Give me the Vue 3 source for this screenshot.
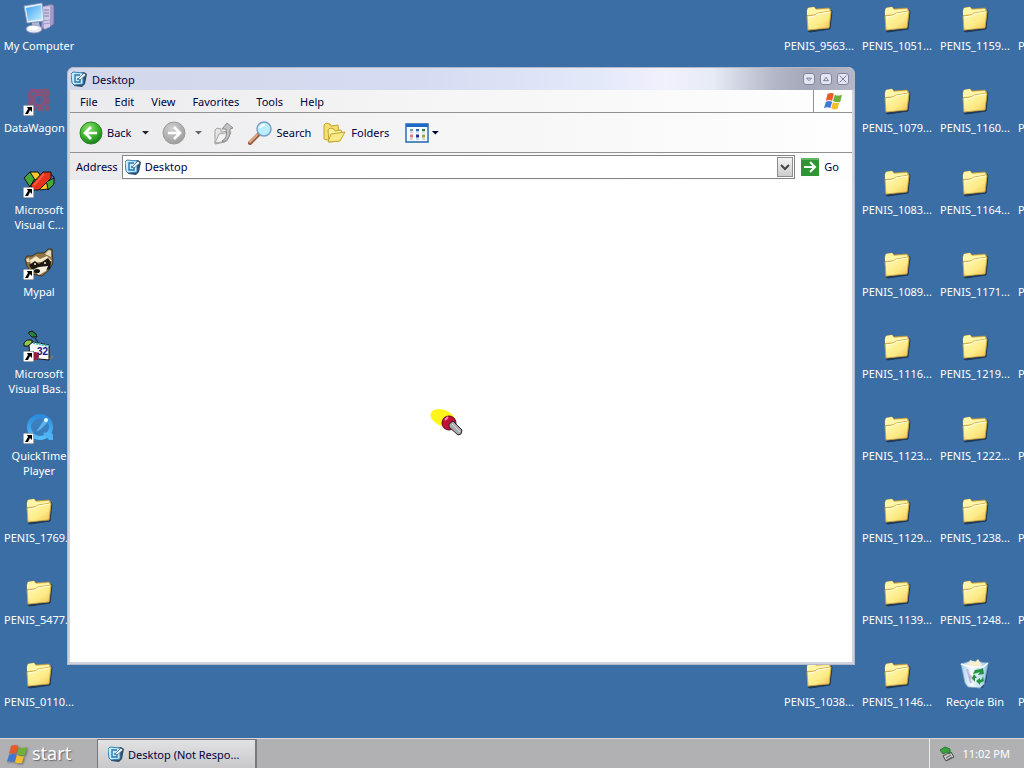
<script setup>
import { ref } from 'vue'

const address = ref('Desktop')

const menus = ['File', 'Edit', 'View', 'Favorites', 'Tools', 'Help']

const folder = (label, col, row) => ({ icon: 'folder', label, col, row })

const leftItems = [
  { icon: 'computer', label: 'My Computer', col: 1, row: 1 },
  { icon: 'wagon', label: 'DataWagon', col: 1, row: 2, shortcut: true, start: true },
  { icon: 'vc', label: 'Microsoft Visual C...', col: 1, row: 3, shortcut: true },
  { icon: 'mypal', label: 'Mypal', col: 1, row: 4, shortcut: true },
  { icon: 'vb', label: 'Microsoft Visual Bas...', col: 1, row: 5, shortcut: true, number: '32' },
  { icon: 'quicktime', label: 'QuickTime Player', col: 1, row: 6, shortcut: true },
  folder('PENIS_1769...', 1, 7),
  folder('PENIS_5477...', 1, 8),
  folder('PENIS_0110...', 1, 9)
]

const column12 = ['1051', '1079', '1083', '1089', '1116', '1123', '1129', '1139', '1146']
const column13 = ['1159', '1160', '1164', '1171', '1219', '1222', '1238', '1248']

const items = [
  ...leftItems,
  folder('PENIS_9563...', 11, 1),
  folder('PENIS_1038...', 11, 9),
  ...column12.map((n, i) => folder(`PENIS_${n}...`, 12, i + 1)),
  ...column13.map((n, i) => folder(`PENIS_${n}...`, 13, i + 1)),
  { icon: 'bin', label: 'Recycle Bin', col: 13, row: 9 },
  ...column12.map((n, i) => ({ ...folder('P', 14, i + 1), start: true }))
]
</script>

<template>
  <div class="screen">
    <svg class="defs" aria-hidden="true">
      <defs>
        <linearGradient id="g-folder" x1="0" y1="0" x2="1" y2="1">
          <stop offset="0" stop-color="#fffcb8" />
          <stop offset="0.6" stop-color="#fdea86" />
          <stop offset="1" stop-color="#efc04e" />
        </linearGradient>
        <linearGradient id="g-screen" x1="0" y1="0" x2="1" y2="1">
          <stop offset="0" stop-color="#3f9ff2" />
          <stop offset="1" stop-color="#c2f1ff" />
        </linearGradient>
        <radialGradient id="g-back" cx="0.4" cy="0.3" r="0.75">
          <stop offset="0" stop-color="#8be36c" />
          <stop offset="0.6" stop-color="#37ae2a" />
          <stop offset="1" stop-color="#14761a" />
        </radialGradient>
        <radialGradient id="g-next" cx="0.4" cy="0.3" r="0.75">
          <stop offset="0" stop-color="#d2d2d2" />
          <stop offset="1" stop-color="#9a9a9a" />
        </radialGradient>
        <linearGradient id="g-bin" x1="0" y1="0" x2="1" y2="0">
          <stop offset="0" stop-color="#a8d0ee" />
          <stop offset="0.4" stop-color="#f3faff" />
          <stop offset="1" stop-color="#9cc6e4" />
        </linearGradient>
        <linearGradient id="g-qt" x1="0" y1="0" x2="0" y2="1">
          <stop offset="0" stop-color="#2a8be0" />
          <stop offset="1" stop-color="#58bcf6" />
        </linearGradient>
      </defs>
      <symbol id="i-folder" viewBox="0 0 32 32">
        <path d="M5 29 26 26 28 8 29 9 27 27 7 30z" fill="#16263a" stroke="#16263a" opacity="0.75" />
        <path d="M4 9 5 6 11 5 13 7 26 6 28 9 26 25 5 28z" fill="#f0cf68" stroke="#b9923a" stroke-width="0.7" />
        <path d="M4 9 5 6 11 5 13 8 26 7 26 11 4 13z" fill="#fff6a8" />
        <path d="M4 14 12 13 15 11 28 9 26 26 5 28z" fill="url(#g-folder)" stroke="#c59c3c" stroke-width="0.8" />
        <path d="M5 15 12 14 15 12 27 10" fill="none" stroke="#fffde0" />
      </symbol>
      <symbol id="i-computer" viewBox="0 0 32 32">
        <path d="M20 4 29 2 31 4 31 22 22 28 18 25z" fill="#a39ac8" stroke="#6a6698" stroke-width="0.7" />
        <path d="M19 5 27 4 27 25 21 27z" fill="#cfcaea" />
        <path d="M21 8h5M21 11h5M21 14h5" stroke="#8078a8" />
        <path d="M20 19 27 18M20 22 27 21" stroke="#a09ac8" />
        <path d="M1 4 19 1 21 19 4 21z" fill="#e8f1fb" stroke="#8198bd" stroke-width="0.8" />
        <path d="M3 6 18 3 19 17 5 19z" fill="url(#g-screen)" />
        <path d="M9 21 16 20 17 25 9 25z" fill="#b4bad0" />
        <ellipse cx="11" cy="27" rx="8" ry="4" fill="#e7e9f3" stroke="#8a92b4" stroke-width="0.8" />
        <ellipse cx="10" cy="26" rx="5" ry="2" fill="#fff" />
      </symbol>
      <symbol id="i-wagon" viewBox="0 0 32 32">
        <g fill="none" stroke="#a0486a" opacity="0.7">
          <path d="M7 7h18v18H7z" stroke-width="4" stroke-dasharray="7 1" stroke-linejoin="round" />
          <circle cx="16" cy="16" r="6" stroke-width="4" />
        </g>
        <circle cx="16" cy="16" r="2" fill="#6a5586" />
      </symbol>
      <symbol id="i-vc" viewBox="0 0 32 32">
        <g stroke="#111" stroke-linejoin="round">
          <path d="M1 12 7 6 12 12 7 21z" fill="#43a935" />
          <path d="M7 6 15 6 19 12 12 14z" fill="#f4c82e" />
          <path d="M25 6 31 11 30 18 24 13z" fill="#3978cf" />
          <path d="M31 12 31 18 25 24 23 16z" fill="#43a935" />
          <path d="M14 20 23 14 25 23 17 24z" fill="#f4c82e" />
          <path d="M8 19 20 6 28 6 28 12 16 24 9 24z" fill="#e5321c" />
        </g>
        <path d="M11 19 21 8" stroke="#ff5a3c" stroke-width="2" />
      </symbol>
      <symbol id="i-mypal" viewBox="0 0 32 32">
        <path d="M2 11 4 8 9 8 14 5 21 5 25 1 29 1 30 15 26 22 19 28 9 26 4 18z" fill="#8f7446" stroke="#40341f" />
        <path d="M22 6 26 2 28 3 28 9z" fill="#e8dabb" />
        <path d="M3 11 6 10 7 14 4 14z" fill="#e8dabb" />
        <path d="M7 12 13 8 17 11 24 8 29 13 21 14 16 14 8 17z" fill="#f4e7c7" />
        <path d="M6 17 12 13 16 16 25 10 28 14 27 21 20 23 15 19 9 22z" fill="#1e1812" />
        <path d="M10 22 16 19 25 18 23 23 16 27z" fill="#f4eddd" />
        <circle cx="12" cy="16" r="1" fill="#f4edd0" />
        <circle cx="22" cy="15" r="1" fill="#f4edd0" />
        <ellipse cx="14" cy="23" rx="3" ry="2" fill="#15110e" />
      </symbol>
      <symbol id="i-vb" viewBox="0 0 32 32">
        <path d="M6 2 9 1 13 4 14 7 9 7 6 4z" fill="#23833b" stroke="#111" />
        <path d="M12 8 15 12" stroke="#111" />
        <path d="M1 13 4 10 9 10 9 14 5 16 1 16z" fill="#91c84a" stroke="#111" />
        <path d="M6 15 10 12 26 15 26 30 7 28z" fill="#f8f8f8" stroke="#111" />
        <path d="M10 13 26 16" stroke="#44b7bc" stroke-width="2" stroke-dasharray="2 1" />
        <circle cx="12" cy="26" r="4" fill="#95203d" />
        <path d="M27 29l3-3" stroke="#8a7660" stroke-width="2" />
      </symbol>
      <symbol id="i-quicktime" viewBox="0 0 32 32">
        <circle cx="17" cy="15" r="11" fill="#3c7fbe" stroke="url(#g-qt)" stroke-width="4" />
        <path d="M20 21 26 28 30 28 30 22 26 20z" fill="#4db2f3" />
        <path d="M13 20 21 8 25 10 18 17z" fill="#5cb4ef" />
        <circle cx="23" cy="8" r="2" fill="#e2f8ff" />
      </symbol>
      <symbol id="i-bin" viewBox="0 0 32 32">
        <path d="M9 30 24 30 30 6 27 25z" fill="#142d4b" opacity="0.5" />
        <path d="M2 6 12 3 29 5 25 26 21 30 9 29 6 25z" fill="url(#g-bin)" stroke="#7fa7c5" stroke-width="0.8" />
        <path d="M9 8 11 2 16 4 19 1 23 7 17 10z" fill="#f8efd1" />
        <path d="M2 6 11 9 24 9 29 5" fill="none" stroke="#fff" stroke-width="1.5" />
        <path d="M8 11 12 25M10 17l5 5" stroke="#c1b4dd" stroke-width="2" />
        <path d="M14 16 16 12 22 11 24 10 25 16 19 17 21 14 18 15zM24 18 25 23 21 25 21 27 17 23 21 20 21 22 23 21zM16 24 13 20 15 16 18 20 16 20z" fill="#20963c" />
      </symbol>
      <symbol id="i-shortcut" viewBox="0 0 11 11">
        <path d="M0 0h11v11H0z" fill="#fff" stroke="#555" />
        <path d="M4 2h5v5L7 5 5 9H2L5 4z" fill="#000" />
      </symbol>
      <symbol id="i-desk" viewBox="0 0 16 16">
        <path d="M3 3 13 1 16 3 14 13 11 16 3 15z" fill="#2f4c68" />
        <path d="M0 3 2 1 12 2 12 13 3 14 1 12z" fill="#cdeafb" stroke="#2f83b7" />
        <path d="M9 4 4 4 4 11 9 11 9 8 6 8" fill="none" stroke="#2277ae" stroke-width="1.4" />
        <path d="M7 8 13 2 15 4 9 9z" fill="#e8f6ff" stroke="#31536d" stroke-width="0.7" />
      </symbol>
      <symbol id="i-flag" viewBox="0 0 20 20">
        <path d="M4 2Q8 0 11 2L9 10Q6 8 2 10z" fill="#e65b2b" />
        <path d="M12 3Q15 5 20 3L18 11Q14 12 10 10z" fill="#6fb03a" />
        <path d="M2 11Q6 9 9 11L7 18Q4 16 0 18z" fill="#3f78d4" />
        <path d="M10 11Q13 13 17 12L15 19Q11 20 8 18z" fill="#f3bd2c" />
      </symbol>
    </svg>

    <main class="desktop">
      <div
        v-for="(item, i) in items"
        :key="i"
        class="item"
        :class="{ start: item.start }"
        :style="{ gridColumn: item.col, gridRow: item.row }"
      >
        <div class="item-icon">
          <svg class="glyph"><use :href="'#i-' + item.icon" /></svg>
          <span v-if="item.number" class="number">{{ item.number }}</span>
          <svg v-if="item.shortcut" class="shortcut"><use href="#i-shortcut" /></svg>
        </div>
        <span class="item-label">{{ item.label }}</span>
      </div>

      <section class="window">
        <header class="titlebar">
          <svg class="small-icon"><use href="#i-desk" /></svg>
          <span class="title">Desktop</span>
          <button class="caption" aria-label="Minimize">
            <svg viewBox="0 0 12 12"><path d="M3 5h6L6 8z" /></svg>
          </button>
          <button class="caption" aria-label="Maximize">
            <svg viewBox="0 0 12 12"><path d="M3 8h6L6 4z" /></svg>
          </button>
          <button class="caption" aria-label="Close">
            <svg viewBox="0 0 12 12"><path d="M2 2l8 8M10 2l-8 8" /></svg>
          </button>
        </header>

        <nav class="menubar">
          <button v-for="menu in menus" :key="menu" class="menu">{{ menu }}</button>
          <div class="brand"><svg><use href="#i-flag" /></svg></div>
        </nav>

        <div class="toolbar">
          <button class="tool back">
            <svg class="tool-icon" viewBox="0 0 24 24">
              <circle cx="12" cy="12" r="11" fill="url(#g-back)" stroke="#2c8429" />
              <path d="M12 6 6 12l6 6M7 12h11" fill="none" stroke="#fff" stroke-width="2.6" />
            </svg>
            Back
          </button>
          <button class="arrow" aria-label="Back history"></button>
          <button class="tool forward" aria-label="Forward">
            <svg class="tool-icon" viewBox="0 0 24 24">
              <circle cx="12" cy="12" r="11" fill="url(#g-next)" stroke="#9c9c9c" />
              <path d="M12 6l6 6-6 6M6 12h11" fill="none" stroke="#fff" stroke-width="2.6" />
            </svg>
          </button>
          <button class="arrow dim" aria-label="Forward history"></button>
          <button class="tool up" aria-label="Up">
            <svg class="tool-icon" viewBox="0 0 24 24">
              <path d="M3 9 5 7l4 1v3l7-1-3 11-10 2z" fill="#e5e5e5" stroke="#a2a2a2" />
              <path d="M3 22 7 13l12-2-4 9z" fill="#f2f2f2" stroke="#a2a2a2" />
              <path d="M10 20q6-3 4-12h-4l5-6 6 5-3 1q1 10-7 13z" fill="#c3c3c3" stroke="#8b8b8b" />
            </svg>
          </button>
          <button class="tool search">
            <svg class="tool-icon" viewBox="0 0 24 24">
              <path d="M10 14 2 22" stroke="#935c42" stroke-width="4" stroke-linecap="round" />
              <path d="M9 14 2 21" stroke="#e9a57f" stroke-width="2" stroke-linecap="round" />
              <circle cx="16" cy="8" r="7" fill="#b9effc" stroke="#7d9fc4" stroke-width="1.5" />
              <path d="M12 7q1-3 5-3" fill="none" stroke="#fff" stroke-width="2" />
            </svg>
            Search
          </button>
          <button class="tool folders">
            <svg class="tool-icon" viewBox="0 0 24 24">
              <path d="M1 4 3 2l4 1 1 2 7-1 1 11-12 4-3-1z" fill="#f4df70" stroke="#c4a42f" />
              <path d="M5 9 7 7l4 1 1 2 6-1 1 3-3 8-10 1z" fill="#fff2a1" stroke="#c4a42f" />
              <path d="M5 21 8 13l14-2-5 9z" fill="#f9e988" stroke="#c4a42f" />
            </svg>
            Folders
          </button>
          <button class="tool views" aria-label="Views">
            <svg class="tool-icon" viewBox="0 0 24 20">
              <path d="M1 1h22v18H1z" fill="#f4faff" stroke="#2263ad" stroke-width="1.4" />
              <path d="M1 1h22v3H1z" fill="#1b6ac4" />
              <path d="M5 7h3" stroke="#7d95ad" stroke-width="2" />
              <path d="M11 7h3" stroke="#2668a8" stroke-width="2" />
              <path d="M17 7h3" stroke="#268444" stroke-width="2" />
              <path d="M5 13h3" stroke="#e27b73" stroke-width="3" />
              <path d="M11 13h3" stroke="#262f8b" stroke-width="3" />
              <path d="M17 13h3" stroke="#9fa63f" stroke-width="3" />
              <path d="M5 9h3M11 9h3M17 9h3M5 16h3M11 16h3M17 16h3" stroke="#a9b2c0" />
            </svg>
          </button>
          <button class="arrow navy" aria-label="Choose view"></button>
        </div>

        <form class="addressbar" @submit.prevent>
          <label for="address">Address</label>
          <div class="address-box">
            <svg class="small-icon"><use href="#i-desk" /></svg>
            <input id="address" v-model="address" type="text" />
            <button type="button" class="drop" aria-label="Show addresses">
              <svg viewBox="0 0 10 8"><path d="M1 2l4 4 4-4" /></svg>
            </button>
          </div>
          <button class="go">
            <svg viewBox="0 0 18 18">
              <path d="M0 0h18v18H0z" fill="#2f9436" />
              <path d="M0 0h18v2H0z" fill="#63b563" />
              <path d="M3 9h11M9 4l5 5-5 5" fill="none" stroke="#fff" stroke-width="2" />
            </svg>
            Go
          </button>
        </form>

        <div class="content"></div>
      </section>

      <svg class="pointer" viewBox="0 0 34 30">
        <ellipse cx="13" cy="10" rx="13" ry="8" transform="rotate(22 13 10)" fill="#fff51c" />
        <circle cx="19" cy="15" r="7" fill="#c40f3c" stroke="#5d0a20" />
        <path d="M15 12 18 9" stroke="#ff8ba0" stroke-width="2" />
        <path d="M19 16 23 13 32 22 31 26 28 27 19 19z" fill="#a9a9a9" stroke="#222" />
        <path d="M22 16 30 24" stroke="#ddd" />
      </svg>
    </main>

    <footer class="taskbar">
      <button class="start-button">
        <svg><use href="#i-flag" /></svg>
        start
      </button>
      <button class="task">
        <svg class="small-icon"><use href="#i-desk" /></svg>
        Desktop (Not Respo...
      </button>
      <div class="tray">
        <svg viewBox="0 0 16 16">
          <path d="M4 10 12 6 15 11 7 15z" fill="#c9c9c9" stroke="#4a4a4a" />
          <path d="M7 12 12 9M8 14 13 11" stroke="#555" />
          <path d="M1 4 6 1 11 3 11 8 8 6 4 8z" fill="#37a33a" stroke="#1f6b28" stroke-width="0.8" />
        </svg>
        <time>11:02 PM</time>
      </div>
    </footer>
  </div>
</template>

<style>
body {
  margin: 0;
  overflow: hidden;
}
</style>

<style scoped>
.screen {
  display: flex;
  flex-direction: column;
  min-height: 100vh;
  overflow: hidden;
  background: #3b6ea5;
  font-family: "Noto Sans", "Open Sans", sans-serif;
  font-size: 11px;
  line-height: 15px;
  color: #00003c;
}
.defs {
  position: absolute;
  width: 0;
  height: 0;
}
button {
  display: flex;
  align-items: center;
  border: 0;
  padding: 0;
  background: none;
  color: inherit;
  font: inherit;
}
svg {
  flex: none;
}
.desktop {
  position: relative;
  flex: 1;
  display: grid;
  grid-template-columns: repeat(14, 78px);
  grid-template-rows: repeat(9, 82px);
  overflow: hidden;
}
.item {
  display: flex;
  flex-direction: column;
  align-items: center;
  gap: 4px;
  padding: 2px 2px 0;
  color: #fff;
  text-align: center;
}
.item.start .item-label {
  align-self: flex-start;
  padding-left: 2px;
}
.item-icon {
  position: relative;
  width: 32px;
  height: 32px;
}
.glyph {
  width: 32px;
  height: 32px;
}
.shortcut {
  position: absolute;
  left: 0;
  bottom: 0;
  width: 11px;
  height: 11px;
}
.number {
  position: absolute;
  top: 16px;
  left: 14px;
  color: #15157c;
  font: bold 10px/11px "Liberation Sans", sans-serif;
}
.window {
  position: absolute;
  top: 67px;
  right: 169px;
  bottom: 73px;
  left: 67px;
  display: flex;
  flex-direction: column;
  box-sizing: border-box;
  padding: 1px 3px 3px;
  border-radius: 7px 7px 0 0;
  background: #d0d2de;
  box-shadow: inset 0 0 0 1px #b4b8c8;
}
.titlebar {
  display: flex;
  align-items: center;
  gap: 5px;
  height: 22px;
  padding: 0 5px 0 3px;
  margin: 0 -2px;
  border-radius: 6px 6px 0 0;
  background: linear-gradient(90deg, #d3d8ea 0%, #d5dcf2 45%, #e4e9fa 68%, #f1f1fc 76%, #e6ebf5 82%, #b3b6c6 90%, #a5a8b9 94%, #b4b7c6 100%);
}
.small-icon {
  width: 16px;
  height: 16px;
}
.title {
  flex: 1;
}
.caption {
  justify-content: center;
  box-sizing: border-box;
  width: 12px;
  height: 12px;
  border: 1px solid #80849c;
  border-radius: 3px;
  background: #e4e6f1;
}
.caption svg {
  width: 10px;
  height: 10px;
  fill: none;
  stroke: #656a88;
}
.menubar,
.toolbar,
.addressbar {
  display: flex;
  align-items: center;
  background: linear-gradient(90deg, #ebebee, #f6f6f6 50%, #fefefe);
}
.menubar {
  gap: 17px;
  height: 22px;
  padding-left: 10px;
  border-bottom: 1px solid #929292;
}
.brand {
  display: flex;
  align-items: center;
  justify-content: center;
  width: 38px;
  height: 22px;
  margin-left: auto;
  border-left: 1px solid #929292;
  background: #fff;
}
.brand svg {
  width: 18px;
  height: 18px;
}
.toolbar {
  height: 39px;
  padding-left: 9px;
  border-bottom: 1px solid #929292;
}
.tool {
  gap: 4px;
}
.tool-icon {
  width: 24px;
  height: 24px;
}
.arrow {
  width: 8px;
  height: 4px;
  margin-left: 10px;
  background: #222;
  clip-path: polygon(0 0, 100% 0, 50% 100%);
}
.arrow.dim {
  margin-left: 8px;
  background: #666;
}
.arrow.navy {
  margin-left: 2px;
  background: #00003c;
}
.forward {
  margin-left: 13px;
}
.up {
  margin-left: 10px;
}
.search,
.folders {
  margin-left: 12px;
}
.views {
  margin-left: 16px;
}
.addressbar {
  gap: 4px;
  height: 27px;
  padding: 0 13px 0 6px;
}
.address-box {
  flex: 1;
  display: flex;
  align-items: center;
  box-sizing: border-box;
  height: 24px;
  padding: 0 1px 0 2px;
  border: 1px solid #848484;
  background: #fff;
}
.address-box input {
  flex: 1;
  min-width: 0;
  border: 0;
  padding: 0 0 0 4px;
  outline: 0;
  background: none;
  color: inherit;
  font: inherit;
}
.drop {
  justify-content: center;
  box-sizing: border-box;
  width: 16px;
  height: 20px;
  border: 1px solid #8c8c8c;
  background: linear-gradient(#f4f4f4, #cccccc);
}
.drop svg {
  width: 10px;
  height: 8px;
  fill: none;
  stroke: #444;
  stroke-width: 2;
}
.go {
  gap: 5px;
  margin-left: 2px;
}
.go svg {
  width: 18px;
  height: 18px;
}
.content {
  flex: 1;
  background: #fff;
}
.pointer {
  position: absolute;
  left: 430px;
  top: 408px;
  width: 34px;
  height: 30px;
}
.taskbar {
  display: flex;
  box-sizing: border-box;
  height: 30px;
  border-top: 1px solid #d8d8d8;
  background: #b1b1b3;
}
.start-button {
  gap: 5px;
  width: 97px;
  padding-left: 7px;
  color: #fff;
  font-size: 18px;
  text-shadow: 1px 1px 1px #666;
}
.start-button svg {
  width: 20px;
  height: 20px;
  filter: drop-shadow(1px 1px 1px #666);
}
.task {
  gap: 4px;
  box-sizing: border-box;
  width: 160px;
  padding-left: 10px;
  border: 1px solid #77777c;
  border-width: 1px 2px 0 1px;
  background: linear-gradient(#e2e2e4, #c8c8ca);
}
.tray {
  display: flex;
  align-items: center;
  gap: 7px;
  margin-left: auto;
  padding: 0 14px 0 9px;
  border-left: 1px solid #ececec;
  color: #fff;
}
.tray svg {
  width: 16px;
  height: 16px;
}
</style>
